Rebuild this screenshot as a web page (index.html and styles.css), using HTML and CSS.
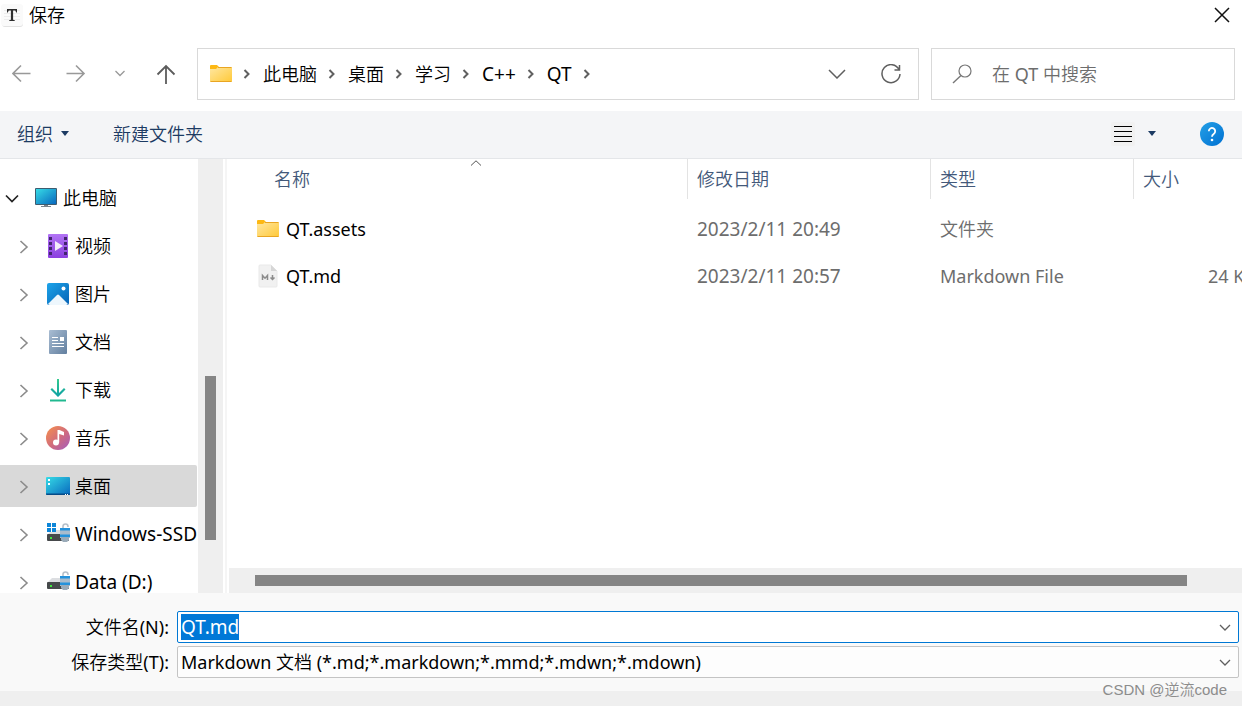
FILE: index.html
```html
<!DOCTYPE html>
<html lang="zh-CN">
<head>
<meta charset="utf-8">
<title>保存</title>
<meta name="viewport" content="width=device-width, initial-scale=1">
<link rel="stylesheet" href="styles.css">
</head>
<body>
<svg class="defs" aria-hidden="true">
  <defs>
    <linearGradient id="g-folder" x1="0" y1="0" x2="1" y2="1"><stop offset="0" stop-color="#ffe7a2"/><stop offset="1" stop-color="#ffc938"/></linearGradient>
    <linearGradient id="g-screen" x1="0" y1="0" x2="1" y2="1"><stop offset="0" stop-color="#36dbe6"/><stop offset="1" stop-color="#0868be"/></linearGradient>
    <linearGradient id="g-video" x1="0" y1="0" x2="0" y2="1"><stop offset="0" stop-color="#b274f5"/><stop offset="1" stop-color="#8b3fdf"/></linearGradient>
    <linearGradient id="g-picture" x1="0" y1="0" x2="1" y2="1"><stop offset="0" stop-color="#1da4ea"/><stop offset="1" stop-color="#0763b5"/></linearGradient>
    <linearGradient id="g-doc" x1="0" y1="0" x2="1" y2="1"><stop offset="0" stop-color="#a9bdd3"/><stop offset="1" stop-color="#627f9f"/></linearGradient>
    <linearGradient id="g-down" x1="0" y1="0" x2="0" y2="1"><stop offset="0" stop-color="#35cb8f"/><stop offset="1" stop-color="#0c9fa5"/></linearGradient>
    <linearGradient id="g-music" x1="0" y1="0" x2="1" y2="1"><stop offset="0.1" stop-color="#f08a53"/><stop offset="0.55" stop-color="#cf6a80"/><stop offset="1" stop-color="#a15cc0"/></linearGradient>
    <linearGradient id="g-help" x1="0" y1="0" x2="1" y2="1"><stop offset="0" stop-color="#24a0e6"/><stop offset="1" stop-color="#0070d2"/></linearGradient>
    <symbol id="folder" viewBox="0 0 24 20">
      <path d="M1 2a1 1 0 0 1 1-1h6l2 2v3H1z" fill="#fdb813"/>
      <path d="M1 5h6l2-2h13a1 1 0 0 1 1 1v13a1 1 0 0 1-1 1H2a1 1 0 0 1-1-1z" fill="url(#g-folder)"/>
      <path d="M9 3.500h13.500M1.500 17.500h21" stroke="#e9a522" fill="none"/>
    </symbol>
    <symbol id="crumb" viewBox="0 0 8 10"><path d="M1.500 1l4 4-4 4" fill="none" stroke="#606060" stroke-width="2"/></symbol>
    <symbol id="closed" viewBox="0 0 10 16"><path d="M1.500 3l6.500 6-6.500 6" fill="none" stroke="#8b8b8b" stroke-width="1.600"/></symbol>
    <symbol id="chev" viewBox="0 0 18 10"><path d="M1 1l8 8 8-8" fill="none" stroke="currentColor" stroke-width="1.500"/></symbol>
    <symbol id="chev-small" viewBox="0 0 12 7"><path d="M1 1l5 5 5-5" fill="none" stroke="currentColor" stroke-width="1.300"/></symbol>
    <symbol id="drive" viewBox="0 0 24 22">
      <path d="M6 7h14l3 5H1z" fill="#dcdee1"/>
      <rect x="1" y="11" width="22" height="7" rx="1" fill="#46494b"/>
      <rect x="4" y="14" width="2" height="2" fill="#3ee83e"/>
      <path d="M17 6V3.500a2.500 2.500 0 0 1 5 0V4" fill="none" stroke="#b6c0ca" stroke-width="1.600"/>
      <rect x="14" y="6" width="10" height="9" fill="#a9bccd"/>
      <path d="M14 5h10v2.500H14zM14 11.500h10V14H14z" fill="#2492dc"/>
      <path d="M15 14h8v3l-2 2h-4l-2-2z" fill="#9aabb9"/>
    </symbol>
  </defs>
</svg>

<div class="dialog">
  <header class="titlebar">
    <svg width="22" height="26" viewBox="0 0 22 26" aria-hidden="true">
      <rect x="1" y="3" width="21" height="22" rx="3" fill="#e2e2e2"/>
      <rect x="0" y="2" width="22" height="22" rx="3" fill="#fafafa"/>
      <path d="M3 8.500h16M3 11.500h16M3 14.500h16M3 17.500h16" stroke="#ececec"/>
      <path d="M6 7h10v3.500h-.8l-.9-2.100h-2.200V17.800l1.700.4v.8H8.200v-.8l1.700-.4V8.400H7.700l-.9 2.100H6z" fill="#2d2d2d"/>
    </svg>
    <h1 class="title">保存</h1>
    <button class="icon-button close" aria-label="关闭"><svg width="16" height="16" viewBox="0 0 16 16"><path d="M1 1l14 14M15 1L1 15" stroke="#111" stroke-width="1.500"/></svg></button>
  </header>

  <div class="navbar">
    <div class="history">
      <button class="icon-button" aria-label="后退"><svg width="20" height="20" viewBox="0 0 20 20"><path d="M18.500 9.500H1M9 1.500l-8 8 8 8" fill="none" stroke="#999" stroke-width="1.600"/></svg></button>
      <button class="icon-button" aria-label="前进"><svg width="20" height="20" viewBox="0 0 20 20"><path d="M.5 9.500H18M10 1.500l8 8-8 8" fill="none" stroke="#999" stroke-width="1.600"/></svg></button>
      <button class="icon-button pale" aria-label="最近位置"><svg width="12" height="9" viewBox="0 0 12 9"><path d="M1.500 1l4.500 4.500L10.500 1" fill="none" stroke="currentColor" stroke-width="1.300"/></svg></button>
      <button class="icon-button" aria-label="上移"><svg width="20" height="20" viewBox="0 0 20 20"><path d="M10 20V2M1.500 10.500L10 2l8.500 8.500" fill="none" stroke="#5c5c5c" stroke-width="1.800"/></svg></button>
    </div>
    <nav class="address" aria-label="地址">
      <svg width="24" height="20" aria-hidden="true"><use href="#folder"/></svg>
      <ol class="crumbs">
        <li><svg width="8" height="10"><use href="#crumb"/></svg><a href="#">此电脑</a></li>
        <li><svg width="8" height="10"><use href="#crumb"/></svg><a href="#">桌面</a></li>
        <li><svg width="8" height="10"><use href="#crumb"/></svg><a href="#">学习</a></li>
        <li><svg width="8" height="10"><use href="#crumb"/></svg><a class="latin" href="#">C++</a></li>
        <li><svg width="8" height="10"><use href="#crumb"/></svg><a class="latin" href="#">QT</a></li>
        <li><svg width="8" height="10"><use href="#crumb"/></svg></li>
      </ol>
      <div class="address-tools">
        <button class="icon-button dim" aria-label="以前的位置"><svg width="18" height="10"><use href="#chev"/></svg></button>
        <button class="icon-button dim" aria-label="刷新"><svg width="20" height="20" viewBox="0 0 20 20"><path d="M18 5.500A9 9 0 1 0 19 10M18.500 1v5h-5" fill="none" stroke="currentColor" stroke-width="1.500"/></svg></button>
      </div>
    </nav>
    <label class="search">
      <svg width="20" height="20" viewBox="0 0 20 20" aria-hidden="true"><circle cx="13" cy="7" r="6" fill="none" stroke="#777" stroke-width="1.200"/><path d="M9 11.500L1 19" stroke="#777" stroke-width="1.400"/></svg>
      <input type="search" placeholder="在 QT 中搜索" aria-label="在 QT 中搜索">
    </label>
  </div>

  <div class="commands">
    <button class="command">组织 <svg width="8" height="5" viewBox="0 0 8 5"><path d="M0 0h8L4 5z" fill="#1c3b63"/></svg></button>
    <button class="command">新建文件夹</button>
    <div class="view-tools">
      <button class="icon-button view" aria-label="视图"><svg width="24" height="24" viewBox="0 0 24 24"><rect width="24" height="24" rx="2" fill="#f1f1f1"/><path d="M3 4.500h18M3 9.500h18M3 14.500h18M3 19.500h18" stroke="#000"/></svg></button>
      <button class="icon-button" aria-label="更多视图"><svg width="8" height="5" viewBox="0 0 8 5"><path d="M0 0h8L4 5z" fill="#1c3b63"/></svg></button>
      <button class="icon-button help" aria-label="帮助"><svg width="24" height="24" viewBox="0 0 24 24"><circle cx="12" cy="12" r="12" fill="url(#g-help)"/><path d="M8.800 9.200a3.200 3.200 0 1 1 4.900 2.700c-1.200.8-1.700 1.400-1.700 2.900" fill="none" stroke="#fff" stroke-width="1.800"/><circle cx="12" cy="18" r="1.300" fill="#fff"/></svg></button>
    </div>
  </div>

  <main class="browser">
    <nav class="tree" aria-label="文件夹">
      <ul>
        <li><a class="node root" href="#"><svg width="14" height="9" viewBox="0 0 14 9"><path d="M1 1.500l6 6 6-6" fill="none" stroke="#222" stroke-width="1.700"/></svg><svg width="24" height="22" viewBox="0 0 24 22"><path d="M10 17h4v2h3v1H7v-1h3z" fill="#7b838b"/><rect x="1" y="1" width="22" height="17" rx="1" fill="#3d5c70"/><rect x="2" y="2" width="20" height="15" fill="url(#g-screen)"/></svg><span>此电脑</span></a></li>
        <li><a class="node" href="#"><svg width="10" height="16"><use href="#closed"/></svg><svg width="24" height="24" viewBox="0 0 24 24"><rect x="2" y="0" width="20" height="24" rx="1" fill="url(#g-video)"/><path d="M3 3h3v3H3zm0 5h3v3H3zm0 5h3v3H3zm0 5h3v3H3zM18 3h3v3h-3zm0 5h3v3h-3zm0 5h3v3h-3zm0 5h3v3h-3z" fill="#42256e"/><path d="M9 7l8 5-8 5z" fill="#f3ecfa"/></svg><span>视频</span></a></li>
        <li><a class="node" href="#"><svg width="10" height="16"><use href="#closed"/></svg><svg width="24" height="24" viewBox="0 0 24 24"><rect x="1" y="1" width="22" height="22" rx="2" fill="url(#g-picture)"/><path d="M2 22l9-9a1.500 1.500 0 0 1 2 0l9 9q-1 1-2 1H4q-1 0-2-1z" fill="#eef7fd"/><circle cx="17.500" cy="6.500" r="2" fill="#fff"/></svg><span>图片</span></a></li>
        <li><a class="node" href="#"><svg width="10" height="16"><use href="#closed"/></svg><svg width="24" height="24" viewBox="0 0 24 24"><rect x="3" y="0" width="18" height="24" rx="1" fill="url(#g-doc)"/><path d="M6 7.500h6M6 10.500h6M6 13.500h12M6 16.500h12" stroke="#fff" stroke-width="1.200"/><rect x="14" y="7" width="4" height="4" fill="#fff"/></svg><span>文档</span></a></li>
        <li><a class="node" href="#"><svg width="10" height="16"><use href="#closed"/></svg><svg width="24" height="24" viewBox="0 0 24 24"><path d="M11 1h2v14l5-5 1.500 1.500L12 19l-7.500-7.500L6 10l5 5z" fill="url(#g-down)"/><path d="M4 21.500h16v2H4z" fill="#21b990"/></svg><span>下载</span></a></li>
        <li><a class="node" href="#"><svg width="10" height="16"><use href="#closed"/></svg><svg width="24" height="24" viewBox="0 0 24 24"><circle cx="12" cy="12" r="12" fill="url(#g-music)"/><circle cx="10" cy="16.500" r="3" fill="#fff"/><path d="M11.500 4h2l4.500 2v3.500L13.200 8v8.500h-1.700z" fill="#fff"/></svg><span>音乐</span></a></li>
        <li><a class="node selected" href="#" aria-current="true"><svg width="10" height="16"><use href="#closed"/></svg><svg width="24" height="24" viewBox="0 0 24 24"><rect x="0" y="3" width="24" height="18" rx="1" fill="url(#g-screen)"/><path d="M0 19.500h24v.5a1 1 0 0 1-1 1H1a1 1 0 0 1-1-1z" fill="#064b87"/><path d="M2 5h2v2H2zM2 9h2v2H2zM19 20h1v1h-1zM21 20h1v1h-1z" fill="#fff"/></svg><span>桌面</span></a></li>
        <li><a class="node latin" href="#"><svg width="10" height="16"><use href="#closed"/></svg><svg width="24" height="22" viewBox="0 0 24 22"><use href="#drive" width="24" height="22"/><path d="M1 0h9v9H1z" fill="#fff"/><path d="M1 0h4v4H1zM6 0h4v4H6zM1 5h4v4H1zM6 5h4v4H6z" fill="#0d86d8"/></svg><span>Windows-SSD</span></a></li>
        <li><a class="node latin" href="#"><svg width="10" height="16"><use href="#closed"/></svg><svg width="24" height="22"><use href="#drive"/></svg><span>Data (D:)</span></a></li>
      </ul>
    </nav>
    <div class="vscroll"><div class="vthumb"></div></div>
    <section class="files" aria-label="文件">
      <div class="table-wrap">
        <table>
          <colgroup><col class="col-name"><col class="col-date"><col class="col-type"><col class="col-size"></colgroup>
          <thead><tr>
            <th class="name" scope="col" aria-sort="ascending">名称<svg class="sort" width="12" height="6" viewBox="0 0 12 6"><path d="M1 5.500L6 .8l5 4.700" fill="none" stroke="#555"/></svg></th>
            <th scope="col">修改日期</th><th scope="col">类型</th><th scope="col">大小</th>
          </tr></thead>
          <tbody>
            <tr><td class="name"><div class="file"><svg width="24" height="20"><use href="#folder"/></svg>QT.assets</div></td><td class="latin">2023/2/11 20:49</td><td>文件夹</td><td></td></tr>
            <tr><td class="name"><div class="file"><svg width="24" height="24" viewBox="0 0 24 24"><path d="M4 1h11l6 6v15a1 1 0 0 1-1 1H4a1 1 0 0 1-1-1V2a1 1 0 0 1 1-1z" fill="#f1f1f1" stroke="#e9e9e9"/><path d="M15 1v6h6z" fill="#d6d6d6"/><path d="M6.500 16v-4.500l2.500 2.700 2.500-2.700V16M16.500 11v4M14.500 13.500l2 2 2-2" fill="none" stroke="#8c8c8c" stroke-width="1.500"/></svg>QT.md</div></td><td class="latin">2023/2/11 20:57</td><td>Markdown File</td><td class="size">24 KB</td></tr>
          </tbody>
        </table>
      </div>
      <div class="hscroll"><div class="hthumb"></div></div>
    </section>
  </main>

  <form class="fields">
    <label for="filename">文件名(N):</label>
    <div class="combo active">
      <input id="filename" class="latin" type="text" value="QT.md" autocomplete="off" spellcheck="false">
      <button type="button" class="icon-button dim" aria-label="以前的文件名"><svg width="12" height="7"><use href="#chev-small"/></svg></button>
    </div>
    <label for="filetype">保存类型(T):</label>
    <div class="combo">
      <select id="filetype"><option>Markdown 文档 (*.md;*.markdown;*.mmd;*.mdwn;*.mdown)</option></select>
      <svg class="arrow dim" width="12" height="7" aria-hidden="true"><use href="#chev-small"/></svg>
    </div>
  </form>
  <footer class="bottom"><span class="watermark">CSDN @逆流code</span></footer>
</div>
<script src="app.js"></script>
</body>
</html>
```

FILE: styles.css
```css
* { box-sizing: border-box; }

body {
  margin: 0;
  background: #fff;
  color: #000;
  font: 18px/24px "Noto Sans", "Noto Sans CJK SC DemiLight", "Noto Sans CJK SC Light", "Noto Sans CJK SC", sans-serif;
}

button, input, select { font: inherit; color: inherit; }
a { color: inherit; text-decoration: none; }
ul, ol { margin: 0; padding: 0; list-style: none; }
svg { display: block; flex: none; }
.defs { position: absolute; width: 0; height: 0; }

.dialog { display: flex; flex-direction: column; min-height: 100vh; overflow: hidden; }

.titlebar { display: flex; align-items: center; height: 32px; padding: 0 12px 2px 1px; }
.title { margin: 0 0 0 6px; font-size: 18px; font-weight: 400; }

.icon-button {
  display: flex;
  align-items: center;
  justify-content: center;
  padding: 0;
  border: 0;
  background: none;
}
.close { margin-left: auto; }
.pale { color: #999; }
.dim { color: #5f5f5f; }

.navbar { display: flex; height: 79px; padding: 16px 7px 11px 12px; }
.history { display: grid; grid-template-columns: 54px 48px 42px 20px; justify-items: start; width: 185px; }
.address { display: flex; flex: 1; align-items: center; padding: 0 17px 0 11px; border: 1px solid #d9d9d9; }
.crumbs { display: flex; gap: 11px; margin-left: 10px; }
.crumbs li { display: flex; align-items: center; gap: 12px; }
.address-tools { display: flex; gap: 35px; margin-left: auto; }
.search {
  display: flex;
  align-items: center;
  gap: 20px;
  width: 304px;
  margin-left: 12px;
  padding: 0 20px;
  border: 1px solid #d9d9d9;
}
.search input { flex: 1; min-width: 0; padding: 0; border: 0; outline: 0; background: none; }
.search input::placeholder { color: #6d6d6d; opacity: 1; }

.commands {
  display: flex;
  align-items: center;
  gap: 44px;
  height: 48px;
  padding: 0 18px 2px 17px;
  border-bottom: 1px solid #e4e6e9;
  background: #f4f5f7;
}
.command { display: flex; align-items: center; gap: 8px; padding: 0; border: 0; background: none; color: #1c3b63; }
.view-tools { display: flex; align-items: center; margin-left: auto; }
.view { margin-right: 13px; }
.help { margin-left: 44px; }

.browser { display: flex; flex: 1; min-height: 0; }
.tree { flex: none; width: 197px; height: 434px; padding-top: 18px; overflow: hidden; }
.tree ul { display: grid; gap: 6px; }
.node { display: flex; align-items: center; height: 42px; padding-left: 19px; white-space: nowrap; }
.node svg + svg { margin: 0 5px 0 17px; }
.node.root { padding-left: 5px; }
.node.root svg + svg { margin-left: 15px; }
.selected { background: #d9d9d9; border-radius: 0 2px 2px 0; }
.latin { font-size: 19px; }
.vscroll { flex: none; width: 25px; margin-left: 1px; padding: 217px 7px 53px; background: #efefef; }
.vthumb { height: 100%; background: #858585; }

.files { display: flex; flex: 1; flex-direction: column; min-width: 0; margin-left: 2px; border-left: 2px solid #f5f5f5; }
.table-wrap { flex: 1; padding-left: 2px; overflow: hidden; }
table { width: 1036px; table-layout: fixed; border-collapse: separate; border-spacing: 0; }
.col-name { width: 458px; }
.col-date { width: 243px; }
.col-type { width: 203px; }
.col-size { width: 132px; }
th { position: relative; height: 40px; padding: 0 9px; border-left: 1px solid #e3e3e3; color: #43597a; font-weight: 400; text-align: left; }
th.name { padding-left: 45px; border-left: 0; }
.sort { position: absolute; top: 1px; left: 241px; }
td { height: 47px; padding: 0 9px 0 10px; color: #6d6d6d; }
td.name { padding-left: 27px; color: #000; }
tbody tr:first-child td { height: 53px; padding-top: 6px; }
.file { display: flex; align-items: center; gap: 6px; }
.size { text-align: right; }
.hscroll { height: 25px; margin-left: 2px; padding: 7px 55px 7px 26px; background: #efefef; }
.hthumb { height: 100%; background: #858585; }

.fields {
  display: grid;
  grid-template-columns: 169px 1fr;
  align-items: center;
  gap: 3px 8px;
  padding: 18px 3px 13px 0;
  background: #f9f9f9;
}
.fields label { text-align: right; }
.combo { position: relative; display: flex; align-items: center; height: 32px; border: 1px solid #c4c4c4; border-radius: 2px; background: #fdfdfd; }
.combo.active { border-color: #0078d4; background: #fff; }
.combo input, .combo select { flex: 1; min-width: 0; height: 26px; padding: 0 3px; border: 0; outline: 0; background: none; appearance: none; }
.combo .icon-button { width: 26px; height: 28px; }
.combo .arrow { position: absolute; right: 7px; pointer-events: none; }
.combo input::selection { background: #0078d7; color: #fff; }

.bottom { display: flex; justify-content: flex-end; height: 15px; padding-right: 15px; background: #efefef; }
.watermark { margin-top: -13px; color: #8c8c8c; font: 15px/24px "Liberation Sans", "Noto Sans CJK SC DemiLight", "Noto Sans CJK SC Light", "Noto Sans CJK SC", sans-serif; }
```

FILE: app.js
```js
const filename = document.getElementById('filename');
filename.focus();
filename.select();
```
